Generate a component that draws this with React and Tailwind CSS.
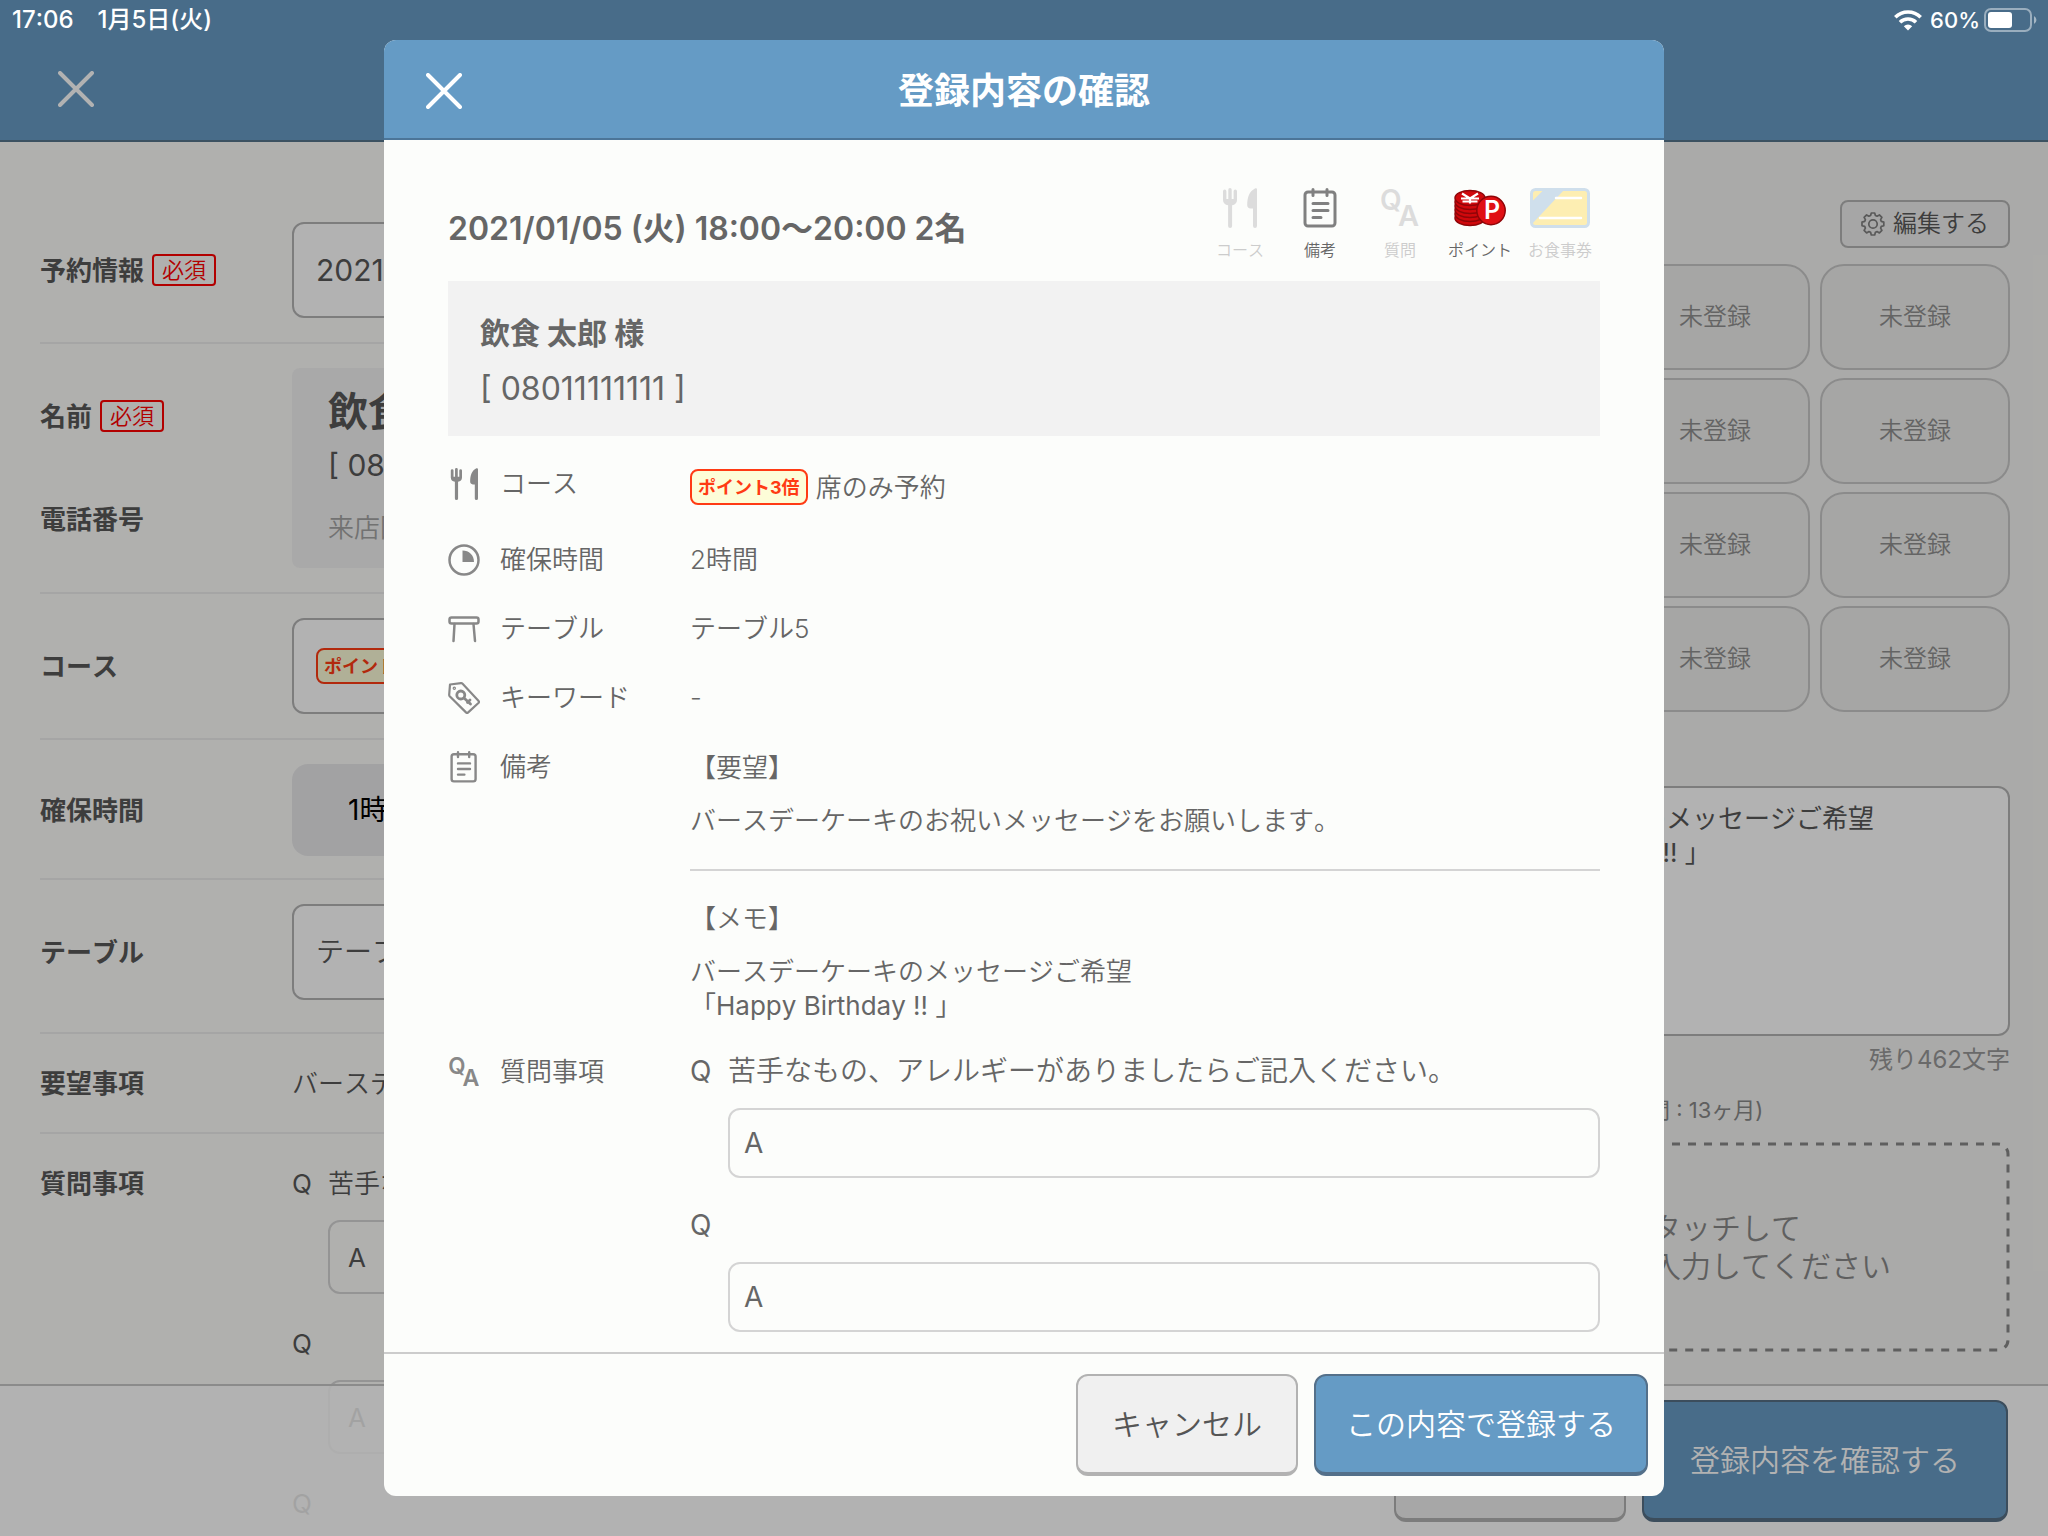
import React from 'react';

const FIELD = 'rounded-xl border-2 border-[#b4b4b4] bg-white';

const ForkKnifeIcon = ({ className }) => (
  <svg className={className} viewBox="0 0 36 40" fill="currentColor">
    <path d="M1 3.2a1.7 1.7 0 013.4 0V11h1.9V1.7a1.7 1.7 0 013.4 0V11h1.9V3.2a1.7 1.7 0 013.4 0V12c0 3-2 4.900-4.900 5.300V38a2 2 0 01-4 0V17.300C3 16.900 1 15 1 12z" />
    <path d="M35 1.500V38a2 2 0 01-4 0V20.500h-2.500c-2 0-3.300-1.300-3.300-3.500 0-8 2.300-14 7.800-16.600 1.100-.5 2 0 2 1.100z" />
  </svg>
);

const MemoIcon = ({ className }) => (
  <svg className={className} viewBox="0 0 34 40" fill="none" stroke="currentColor" strokeWidth={3} strokeLinecap="round">
    <rect x="2" y="4" width="30" height="34" rx="3" />
    <path d="M10 1.500v6M24 1.500v6M10 15.500h15M10 22.500h15M10 29.500h8" />
  </svg>
);

const QaIcon = ({ className }) => (
  <svg className={className} viewBox="0 0 38 40" fill="currentColor" fontFamily="Inter, sans-serif" fontWeight="600">
    <text x="-1" y="22" fontSize="28">Q</text>
    <text x="17" y="38" fontSize="29">A</text>
  </svg>
);

const ClockIcon = ({ className }) => (
  <svg className={className} viewBox="0 0 32 32">
    <circle cx="16" cy="16" r="14.500" fill="none" stroke="currentColor" strokeWidth={2.500} />
    <path d="M14.500 6.500v11.500H26C26 11 21 6.500 14.500 6.500z" fill="currentColor" />
  </svg>
);

const TableIcon = ({ className }) => (
  <svg className={className} viewBox="0 0 32 32" fill="none" stroke="currentColor" strokeWidth={2.500} strokeLinecap="round">
    <rect x="1.500" y="4.500" width="29" height="6" rx="2" />
    <path d="M6.500 11L5.500 28M25.500 11l1.500 17" />
  </svg>
);

const TagIcon = ({ className }) => (
  <svg className={className} viewBox="0 0 32 32" fill="none" stroke="currentColor" strokeWidth={2.200} strokeLinejoin="round" strokeLinecap="round">
    <path d="M2 2.500L13 1.200a2 2 0 011.600.6l15.800 17a1.600 1.600 0 010 2.200l-10.200 9.400a1.600 1.600 0 01-2.200 0L1.700 14.200a2 2 0 01-.5-1.500z" />
    <circle cx="6.300" cy="6.200" r=".6" />
    <circle cx="12.800" cy="13" r="4" strokeWidth={2.800} />
    <path d="M16 16l6.500 6M19.500 20.500l2.500-2.500" strokeWidth={2.800} />
  </svg>
);

const PointIcon = ({ className }) => (
  <svg className={className} viewBox="0 0 52 40" fontFamily="Inter, 'Noto Sans CJK JP', sans-serif" textAnchor="middle">
    <g fill="#d0080c" stroke="#8f0508" strokeWidth={1.500}>
      <ellipse cx="16" cy="30" rx="15" ry="7.500" />
      <ellipse cx="16" cy="26" rx="15" ry="7.500" />
      <ellipse cx="16" cy="22" rx="15" ry="7.500" />
      <ellipse cx="16" cy="18" rx="15" ry="7.500" />
      <ellipse cx="16" cy="14" rx="15" ry="7.500" />
      <ellipse cx="16" cy="10" rx="15" ry="7.500" />
    </g>
    <path d="M8 5.500l8 5 8-5M7 10.500h18M8.500 13.500h15M16 10.500v5" fill="none" stroke="#fff" strokeWidth={2.200} />
    <circle cx="37" cy="22.500" r="14.200" fill="#e01014" stroke="#8f0508" strokeWidth={1.500} />
    <text x="38" y="31" fontSize="25" fontWeight="600" fill="#fff">P</text>
  </svg>
);

const TicketIcon = ({ className }) => (
  <svg className={className} viewBox="0 0 60 40">
    <rect x="1.500" y="1.500" width="57" height="37" rx="4" fill="#fdeeb2" />
    <path d="M2 13.500L13.500 2H34L2 36z" fill="#cfdfec" />
    <rect x="1.500" y="1.500" width="57" height="37" rx="4" fill="none" stroke="#cfdfec" strokeWidth={3} />
    <path d="M26 10h25M10 30h41" stroke="#fff" strokeWidth={2.500} strokeLinecap="round" />
  </svg>
);

const GearIcon = ({ className }) => (
  <svg className={className} viewBox="0 0 24 24" fill="none" stroke="currentColor" strokeWidth={1.700} strokeLinejoin="round">
    <circle cx="12" cy="12" r="4.200" />
    <path d="M10.300 1h3.400l.7 2.500 1.700.7 2.300-1.300 2.500 2.500-1.300 2.300.7 1.700 2.500.7v3.600l-2.500.7-.7 1.700 1.300 2.300-2.500 2.500-2.300-1.300-1.700.7-.7 2.700h-3.400l-.7-2.700-1.700-.7-2.300 1.300-2.500-2.500 1.300-2.300-.7-1.700L1 13.700v-3.600l2.700-.7.7-1.700-1.300-2.300 2.500-2.500 2.300 1.300 1.700-.7z" />
  </svg>
);

const CloseIcon = () => (
  <svg className="w-9 h-9" viewBox="0 0 36 36" fill="none" stroke="currentColor" strokeWidth={4} strokeLinecap="round">
    <path d="M2 2l32 32M34 2L2 34" />
  </svg>
);

const STATUS_ICONS = [
  { label: 'コース', active: false, icon: <ForkKnifeIcon className="h-10 text-[#dcdcdc]" /> },
  { label: '備考', active: true, icon: <MemoIcon className="h-10 text-[#808080]" /> },
  { label: '質問', active: false, icon: <QaIcon className="h-10 text-[#dcdcdc]" /> },
  { label: 'ポイント', active: true, icon: <PointIcon className="h-10" /> },
  { label: 'お食事券', active: false, icon: <TicketIcon className="h-10" /> },
];

const StatusBar = () => (
  <div className="absolute inset-x-0 top-0 z-20 h-10 pl-3 pr-[10px] flex items-center justify-between text-white text-[24px] font-medium">
    <div className="flex gap-6">
      <span>17:06</span>
      <span>1月5日(火)</span>
    </div>
    <div className="flex items-center">
      <svg className="w-7 h-[21px] mr-2" viewBox="0 0 28 21" fill="none" stroke="#fff" strokeWidth={3.600}>
        <path d="M1.300 7.300a18 18 0 0125.400 0" />
        <path d="M6 12.300a11.500 11.500 0 0116 0" />
        <path d="M14 20.500l-4.200-4.200a6 6 0 018.400 0z" fill="#fff" stroke="none" />
      </svg>
      <span className="text-[22px]">60%</span>
      <svg className="w-[54px] h-6 ml-1" viewBox="0 0 54 24">
        <rect x="1" y="1" width="46" height="22" rx="6" fill="none" stroke="#fff" strokeOpacity=".45" strokeWidth={2} />
        <rect x="4" y="4" width="24" height="16" rx="3" fill="#fff" />
        <path d="M50 8a4.500 4.500 0 010 8z" fill="#fff" fillOpacity=".5" />
      </svg>
    </div>
  </div>
);

const Required = () => (
  <span className="h-8 w-16 flex items-center justify-center rounded border-2 border-[#ff0000] text-[22px] font-[350] text-[#ff0000]">必須</span>
);

const PointBadge = () => (
  <span className="h-9 px-[6px] inline-flex items-center rounded-lg border-2 border-[#ff3b14] bg-[#fdfdd8] text-[18px] font-bold text-[#ff3b14] whitespace-nowrap">ポイント3倍</span>
);

const FormRow = ({ label, required, className = 'py-6', children }) => (
  <div className={`flex items-center border-b-2 border-[#ededed] ${className}`}>
    <div className="w-[252px] shrink-0 flex items-center gap-2 font-bold">
      <span>{label}</span>
      {required && <Required />}
    </div>
    <div className="flex-1 whitespace-nowrap">{children}</div>
  </div>
);

const FormQuestion = ({ text }) => (
  <div className="pb-[14px]">
    <div className="h-[70px] mb-[2px] flex items-center">
      <span className="w-9 font-normal">Q</span>
      <span>{text}</span>
    </div>
    <label className="ml-9 h-[74px] px-[18px] flex items-center gap-3 rounded-xl border-2 border-[#d4d4d4] font-normal">
      A
      <input type="text" className="flex-1 outline-none" />
    </label>
  </div>
);

const ReservationForm = () => (
  <main className="flex-1 px-10 pt-14 overflow-hidden">
    <FormRow label="予約情報" required>
      <button className={`${FIELD} w-full h-24 px-[22px] text-left text-[30px] font-normal`}>2021/01/05 (火) 18:00〜20:00 2名</button>
    </FormRow>

    {/* Name and phone share one customer card */}
    <div className="flex py-6 border-b-2 border-[#ededed]">
      <div className="w-[252px] shrink-0 pt-7 flex flex-col gap-16 font-bold">
        <div className="flex items-center gap-2 h-10"><span>名前</span><Required /></div>
        <span className="h-10 leading-10">電話番号</span>
      </div>
      <div className="flex-1 h-[200px] pl-9 pt-4 rounded-lg bg-[#f3f3f2]">
        <p className="text-[40px] leading-[56px] font-bold">飲食 太郎 様</p>
        <p className="text-[30px] leading-[50px] font-normal">[ 08011111111 ]</p>
        <p className="leading-[76px] text-[#a4a4a4]">来店回数 : 0回</p>
      </div>
    </div>

    <FormRow label="コース">
      <button className={`${FIELD} w-full h-24 px-[22px] flex items-center gap-2`}><PointBadge />席のみ予約</button>
    </FormRow>
    <FormRow label="確保時間" className="pt-6 pb-[22px]">
      <button className="w-full h-[92px] px-14 rounded-2xl bg-[#e9e9ea] text-left text-[28px] font-normal text-black">1時間</button>
    </FormRow>
    <FormRow label="テーブル" className="pt-6 pb-8">
      <button className={`${FIELD} w-full h-24 px-[22px] text-left text-[28px]`}>テーブル5</button>
    </FormRow>
    <FormRow label="要望事項" className="h-[100px]">バースデーケーキのお祝いメッセージをお願いします。</FormRow>

    <div className="flex pt-[14px]">
      <div className="w-[252px] shrink-0 h-[72px] leading-[72px] font-bold">質問事項</div>
      <div className="flex-1">
        <FormQuestion text="苦手なもの、アレルギーがありましたらご記入ください。" />
        <FormQuestion />
        <FormQuestion />
      </div>
    </div>
  </main>
);

const SidePanel = () => (
  <aside className="w-[668px] shrink-0 pl-10 pr-[38px] pt-[58px] bg-[#f4f4f2] overflow-hidden">
    <div className="flex justify-end">
      <button className="w-[170px] h-12 flex items-center justify-center gap-2 rounded-lg border-2 border-[#b4b4b4] bg-[#eeeeee] text-[24px] whitespace-nowrap">
        <GearIcon className="w-6 h-6 text-[#808080]" />
        編集する
      </button>
    </div>
    <div className="mt-4 grid grid-cols-3 gap-x-[10px] gap-y-2">
      {Array.from({ length: 12 }, (_, i) => (
        <button key={i} className="h-[106px] rounded-3xl border-2 border-[#c8c8c8] bg-[#eeeeec] text-[24px] text-[#909090]">未登録</button>
      ))}
    </div>
    <textarea
      aria-label="メモ"
      className={`${FIELD} mt-[74px] block w-full h-[250px] px-[10px] py-[14px] leading-[34px] font-normal resize-none`}
      defaultValue={'バースデーケーキのメッセージご希望\n「Happy Birthday  !! 」'}
    />
    <p className="h-12 leading-[48px] text-right text-[24px] font-normal text-[#999999]">残り462文字</p>
    <p className="h-[58px] leading-[52px] text-[22px] font-normal text-[#888888]">手書きメモ(最長保存期間 : 13ヶ月)</p>
    <div className="relative h-[210px] flex items-center justify-center text-[30px] leading-[38px] text-[#888888]">
      <svg className="absolute inset-0 w-full h-full overflow-visible p-[2px]">
        <rect width="100%" height="100%" rx="10" fill="none" stroke="currentColor" strokeWidth={3} strokeDasharray="8 8" />
      </svg>
      <p className="pr-2">
        こちらをタッチして
        <br />
        手書きで入力してください
      </p>
    </div>
  </aside>
);

const DetailRow = ({ icon, label, height = 'min-h-[69px]', children }) => (
  <div className="flex">
    <dt className="w-[242px] h-[69px] shrink-0 flex items-center">
      <span className="w-8 mr-5 flex justify-center text-[#888888]">{icon}</span>
      {label}
    </dt>
    <dd className={`flex-1 flex flex-col justify-center ${height}`}>{children}</dd>
  </div>
);

const ConfirmQuestion = ({ text }) => (
  <div className="pb-[13px] text-[28px]">
    <div className="h-[67px] mb-1 flex items-center">
      <span className="w-[38px] font-normal">Q</span>
      <span>{text}</span>
    </div>
    <label className="ml-[38px] h-[70px] px-[14px] flex items-center gap-3 rounded-xl border-2 border-[#d4d4d4] font-normal">
      A
      <input type="text" className="flex-1 outline-none" />
    </label>
  </div>
);

const ConfirmModal = () => (
  <div className="absolute inset-0 z-10 py-10 flex justify-center bg-black/30">
    <section role="dialog" aria-label="登録内容の確認" className="w-[62.5%] flex flex-col rounded-xl overflow-hidden bg-[#fcfdfb] text-[#666666]">
      <header className="h-[100px] px-[42px] pt-1 shrink-0 flex items-center border-b-2 border-[#4c7598] bg-[#659bc5] text-white">
        <button aria-label="閉じる"><CloseIcon /></button>
        <h1 className="flex-1 pr-9 text-center text-[36px] font-bold">登録内容の確認</h1>
      </header>

      <div className="flex-1 px-16 pt-12 overflow-hidden">
        <div className="h-[93px] flex justify-between">
          <h2 className="h-[82px] leading-[82px] text-[32px] font-semibold">2021/01/05 (火) 18:00〜20:00 2名</h2>
          <ul className="flex">
            {STATUS_ICONS.map(({ label, active, icon }) => (
              <li key={label} className="w-20 flex flex-col items-center whitespace-nowrap">
                {icon}
                <span className={`mt-[10px] text-[16px] leading-6 ${active ? 'text-[#666666]' : 'text-[#cccccc]'}`}>{label}</span>
              </li>
            ))}
          </ul>
        </div>

        <div className="h-[155px] px-8 pt-6 bg-[#f2f2f2] leading-[56px]">
          <p className="text-[30px] font-bold">飲食 太郎 様</p>
          <p className="text-[32px] font-normal">[ 08011111111 ]</p>
        </div>

        <dl className="pt-[13px]">
          <DetailRow label="コース" height="min-h-[76px]" icon={<ForkKnifeIcon className="h-8" />}>
            <div className="flex items-center gap-2"><PointBadge />席のみ予約</div>
          </DetailRow>
          <DetailRow label="確保時間" icon={<ClockIcon className="h-8" />}>2時間</DetailRow>
          <DetailRow label="テーブル" icon={<TableIcon className="h-8" />}>テーブル5</DetailRow>
          <DetailRow label="キーワード" icon={<TagIcon className="h-8" />}>-</DetailRow>
          <DetailRow label="備考" icon={<MemoIcon className="h-8" />}>
            <h3 className="h-[72px] leading-[72px]">【要望】</h3>
            <p className="pb-[31px] leading-[34px] border-b-2 border-[#d4d4d4]">バースデーケーキのお祝いメッセージをお願いします。</p>
            <h3 className="mt-3 h-[72px] leading-[72px]">【メモ】</h3>
            <p className="pb-[14px] leading-[34px]">
              バースデーケーキのメッセージご希望
              <br />
              <span className="font-normal">「Happy Birthday !! 」</span>
            </p>
          </DetailRow>
          <DetailRow label="質問事項" icon={<QaIcon className="h-8" />}>
            <ConfirmQuestion text="苦手なもの、アレルギーがありましたらご記入ください。" />
            <ConfirmQuestion />
          </DetailRow>
        </dl>
      </div>

      <footer className="h-36 px-4 pt-5 shrink-0 flex items-start justify-end gap-4 border-t-2 border-[#cccccc] text-[30px]">
        <button className="h-[102px] px-[34px] rounded-xl border-2 border-b-4 border-[#b2b2b2] bg-[#f0f0f0] text-[#555555]">キャンセル</button>
        <button className="h-[102px] px-[30px] rounded-xl border-2 border-b-4 border-[#54708a] bg-[#659bc5] text-white">この内容で登録する</button>
      </footer>
    </section>
  </div>
);

const App = () => (
  <div className="relative h-screen flex flex-col overflow-hidden bg-[#fcfcfa] text-[26px] font-[350] text-[#585858] font-['Inter','Noto_Sans_CJK_JP',sans-serif] [font-kerning:none]">
    <StatusBar />
    <header className="h-[142px] shrink-0 px-[58px] pt-[38px] flex items-center border-b-2 border-[#55758c] bg-[#679bc4] text-white">
      <button aria-label="閉じる"><CloseIcon /></button>
    </header>

    <div className="flex-1 min-h-0 flex">
      <ReservationForm />
      <SidePanel />
    </div>

    <footer className="absolute inset-x-0 bottom-0 h-[152px] px-10 pt-[14px] flex items-start justify-end gap-4 border-t-2 border-[#c8c8c8] bg-white/87 text-[30px]">
      <button className="w-[232px] h-[122px] rounded-xl border-2 border-b-4 border-[#b2b2b2] bg-[#f0f0f0]">キャンセル</button>
      <button className="w-[366px] h-[122px] rounded-xl border-2 border-b-4 border-[#566f85] bg-[#679bc4] text-white">登録内容を確認する</button>
    </footer>

    <ConfirmModal />
  </div>
);

export default App;
